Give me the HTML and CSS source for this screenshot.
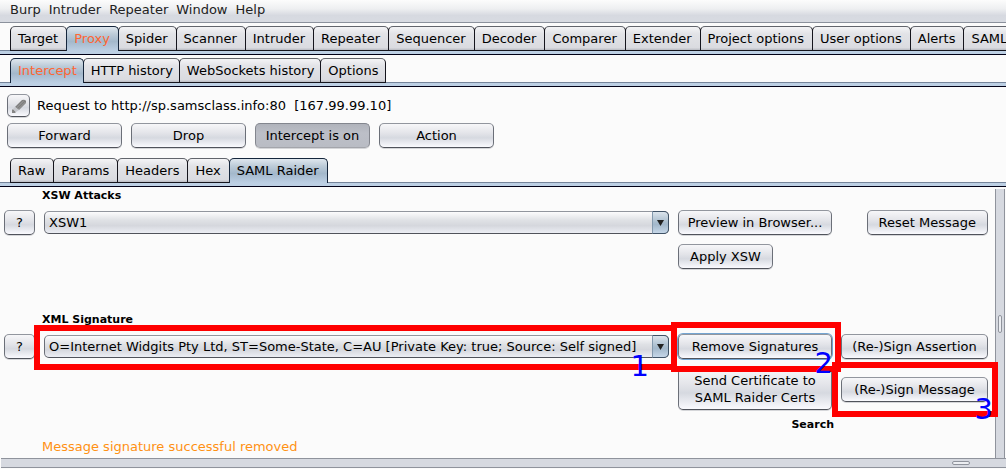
FILE: index.html
```html
<!DOCTYPE html>
<html lang="en">
<head>
<meta charset="utf-8">
<title>Burp Suite - SAML Raider</title>
<link rel="stylesheet" href="styles.css">
</head>
<body>
<div class="app">
  <nav class="menubar">
    <button class="menu">Burp</button><button class="menu">Intruder</button><button class="menu">Repeater</button><button class="menu">Window</button><button class="menu">Help</button>
  </nav>

  <div class="tabs main">
    <button class="tab">Target</button><button class="tab active alert">Proxy</button><button class="tab">Spider</button><button class="tab">Scanner</button><button class="tab">Intruder</button><button class="tab">Repeater</button><button class="tab">Sequencer</button><button class="tab">Decoder</button><button class="tab">Comparer</button><button class="tab">Extender</button><button class="tab">Project options</button><button class="tab">User options</button><button class="tab">Alerts</button><button class="tab last">SAML</button>
  </div>

  <div class="tabs sub">
    <button class="tab active alert">Intercept</button><button class="tab">HTTP history</button><button class="tab">WebSockets history</button><button class="tab">Options</button>
  </div>

  <div class="request">
    <button class="btn edit" aria-label="Edit target">
      <svg width="16" height="16" viewBox="0 0 16 16">
        <path d="M1 15v-3l1-1 3 3-1 1z" fill="#858585"/>
        <path d="M4 9 11 2q3-1 4 1v2L8 12z" fill="#7e7e7e"/>
        <path d="M5.500 10 13 2.500M7 11.500 14.500 4" stroke="#a9a9a9" stroke-width="0.700"/>
        <path d="M4 9l4 3-3 2-3-3z" fill="#c5c7cc"/>
      </svg>
    </button>
    <span class="target">Request to http://sp.samsclass.info:80&nbsp; [167.99.99.10]</span>
  </div>

  <div class="actions">
    <button class="btn">Forward</button>
    <button class="btn">Drop</button>
    <button class="btn pressed" aria-pressed="true">Intercept is on</button>
    <button class="btn">Action</button>
  </div>

  <div class="tabs inner">
    <button class="tab">Raw</button><button class="tab">Params</button><button class="tab">Headers</button><button class="tab">Hex</button><button class="tab active">SAML Raider</button>
  </div>

  <main class="split">
    <section class="panel">
      <label class="heading" for="xsw">XSW Attacks</label>
      <div class="cell help"><button class="btn">?</button></div>
      <div class="cell combo">
        <select id="xsw"><option>XSW1</option></select>
        <span class="arrow"><svg width="7" height="6" viewBox="0 0 7 6"><path d="M0 0h7L3.500 6z" fill="#222"/></svg></span>
      </div>
      <div class="cell"><button class="btn fill">Preview in Browser...</button></div>
      <div class="cell end"><button class="btn">Reset Message</button></div>
      <div class="cell third"><button class="btn">Apply XSW</button></div>

      <label class="heading signature" for="cert">XML Signature</label>
      <div class="cell help"><button class="btn">?</button></div>
      <div class="cell combo mark mark-one">
        <select id="cert"><option>O=Internet Widgits Pty Ltd, ST=Some-State, C=AU [Private Key: true; Source: Self signed]</option></select>
        <span class="arrow"><svg width="7" height="6" viewBox="0 0 7 6"><path d="M0 0h7L3.500 6z" fill="#222"/></svg></span>
        <span class="digit">1</span>
      </div>
      <div class="cell mark mark-two"><button class="btn fill focused">Remove Signatures</button><span class="digit">2</span></div>
      <div class="cell"><button class="btn fill">(Re-)Sign Assertion</button></div>
      <div class="cell third"><button class="btn fill tall">Send Certificate to<br>SAML Raider Certs</button></div>
      <div class="cell mark mark-three"><button class="btn fill">(Re-)Sign Message</button><span class="digit">3</span></div>
      <span class="search">Search</span>
      <output class="status">Message signature successful removed</output>
    </section>
    <div class="divider vertical"><span class="grip"></span></div>
  </main>
  <div class="divider horizontal"><span class="grip"></span></div>
</div>
</body>
</html>
```

FILE: styles.css
```css
* {
  box-sizing: border-box;
}

body {
  margin: 0;
  background: #fbfbfb;
  overflow: hidden;
}

body,
button,
select {
  font: 13px/17px "DejaVu Sans", sans-serif;
  color: #000;
}

.app {
  display: flex;
  flex-direction: column;
  min-height: 100vh;
}

.menubar {
  display: flex;
  gap: 8px;
  height: 23px;
  padding: 0 10px 3px;
  border-bottom: 1px solid #8b919c;
  background: linear-gradient(#fcfcfc, #eeeff1 40%, #d6d9e0 70%, #d8dbe2);
}

.menu {
  padding: 0;
  border: 0;
  background: none;
  color: #222;
}

/* Tab strips */
.tabs {
  display: flex;
  height: 29px;
  margin-top: 3px;
  padding: 0 0 4px 10px;
  border-bottom: 1px solid #000016;
  background: linear-gradient(#75849a, #75849a) 0 24px / 100% 1px no-repeat,
    linear-gradient(#bdd0e4, #bdd0e4) 0 25px / 100% 3px no-repeat;
}

.tabs.main {
  background: linear-gradient(#000016, #000016) 117px 24px / 100% 1px no-repeat,
    linear-gradient(#75849a, #75849a) 0 24px / 100% 1px no-repeat,
    linear-gradient(#bdd0e4, #bdd0e4) 0 25px / 100% 3px no-repeat;
}

.tab {
  flex: none;
  height: 25px;
  margin-right: -1px;
  padding: 0 8px 0 7px;
  border: 1px solid #15151d;
  border-top-color: #62656c;
  border-radius: 5px 5px 0 0;
  background: linear-gradient(#f4f4f6, #e2e3e7 30%, #dadbe0 90%, #b9bbc2);
}

.sub .tab {
  padding-right: 6px;
}

.tab.active {
  z-index: 1;
  padding-bottom: 1px;
  border-color: #15263c;
  border-bottom: 0;
  background: linear-gradient(#dfe7ee, #bccbd8 30%, #a3b8cb 60%, #bdd0e4);
}

.tab.alert {
  color: #ff6633;
}

.tab.last {
  flex: 1;
  min-width: 0;
  margin-right: 0;
  padding-right: 0;
  border-right: 0;
  border-top-right-radius: 0;
  text-align: left;
}

/* Buttons */
.btn {
  height: 25px;
  padding: 0 11px;
  border: 1px solid #6b6f78;
  border-top-color: #92969e;
  border-bottom-color: #50535b;
  border-radius: 5px;
  background: linear-gradient(#f7f7f9, #e3e4e9 40%, #d6d9e0 60%, #fafafe);
  box-shadow: 0 1px 0 #d5d6d9;
  white-space: nowrap;
}

.btn.pressed {
  border-color: #83868e;
  border-bottom-color: #a3a5ab;
  background: linear-gradient(#b0b3bb, #bcbfc7 40%, #b9bcc4);
}

.btn.focused {
  box-shadow: 0 0 0 1px #73a4d1;
}

.btn.fill {
  width: 100%;
  padding: 0;
}

.btn.tall {
  height: 42px;
}

.request {
  display: flex;
  align-items: center;
  gap: 7px;
  padding: 7px 7px 0;
}

.edit {
  display: grid;
  place-items: center;
  width: 23px;
  height: 23px;
  padding: 0;
}

.actions {
  display: flex;
  gap: 9px;
  padding: 6px 7px 0;
}

.actions .btn {
  width: 115px;
  padding: 0;
}

.tabs.inner {
  margin-top: 10px;
}

/* SAML Raider form */
.split {
  display: flex;
  flex: 1;
  padding-right: 1px;
}

.panel {
  display: grid;
  flex: 1;
  grid-template-columns: 35px 1fr 158px 151px;
  align-content: start;
  gap: 5px;
  padding: 2px 5px 2px 2px;
}

.heading,
.search {
  font-size: 11px;
  font-weight: bold;
  line-height: 14px;
}

.heading {
  grid-column: 2 / -1;
}

.heading.signature {
  margin-top: 37px;
}

.search {
  grid-column: 3;
  padding-top: 1px;
  text-align: right;
}

.status {
  grid-column: 2 / -1;
  padding-top: 1px;
  color: #ff9113;
}

.cell {
  display: flex;
  align-items: center;
  position: relative;
  padding: 2px;
}

.cell.help {
  grid-column: 1;
}

.help .btn {
  width: 31px;
  padding: 0;
}

.cell.end {
  justify-content: flex-end;
}

.cell.third {
  grid-column: 3;
}

.combo select {
  width: 100%;
  height: 23px;
  padding: 0 24px 0 4px;
  appearance: none;
  border: 1px solid #6b6f78;
  border-top-color: #92969e;
  border-bottom-color: #50535b;
  border-radius: 5px;
  background: linear-gradient(#fcfcfd, #dfe1e5 40%, #d5d7dd 65%, #eceef4);
}

.arrow {
  display: grid;
  place-items: center;
  position: absolute;
  top: 3px;
  right: 2px;
  width: 17px;
  height: 23px;
  border: 1px solid #3f5266;
  border-left-color: #8399ad;
  border-radius: 0 5px 5px 0;
  background: linear-gradient(#dbe4ec, #a8bccd 50%, #a3b8cb 60%, #c6d7e8);
  pointer-events: none;
}

/* Numbered callouts */
.mark::after {
  content: "";
  position: absolute;
  z-index: 1;
  border: 6px solid #f00;
  pointer-events: none;
}

.mark-one::after {
  inset: -7px -6px -9px -8px;
}

.mark-two::after {
  inset: -10px -7px -11px -5px;
}

.mark-three::after {
  inset: -4px -8px -5px -7px;
}

.digit {
  position: absolute;
  z-index: 2;
  color: #00f;
  font-size: 29px;
  line-height: 30px;
}

.mark-one .digit {
  right: 22px;
  bottom: -20px;
}

.mark-two .digit {
  right: 1px;
  bottom: -17px;
}

.mark-three .digit {
  right: -3px;
  bottom: -12px;
}

/* Split pane dividers */
.divider {
  display: grid;
  place-items: center;
  border: 0 solid #8f939c;
  background: #d6d9e0;
}

.divider.vertical {
  width: 10px;
  margin-top: 2px;
  border-width: 0 1px;
}

.divider.horizontal {
  height: 10px;
  margin: 0 0 1px 1px;
  padding-left: 914px;
  border-width: 1px 0;
}

.grip {
  border: 1px solid #8f939c;
  border-radius: 2px;
  background: #eceef2;
}

.vertical .grip {
  width: 4px;
  height: 18px;
}

.horizontal .grip {
  width: 18px;
  height: 4px;
}
```
